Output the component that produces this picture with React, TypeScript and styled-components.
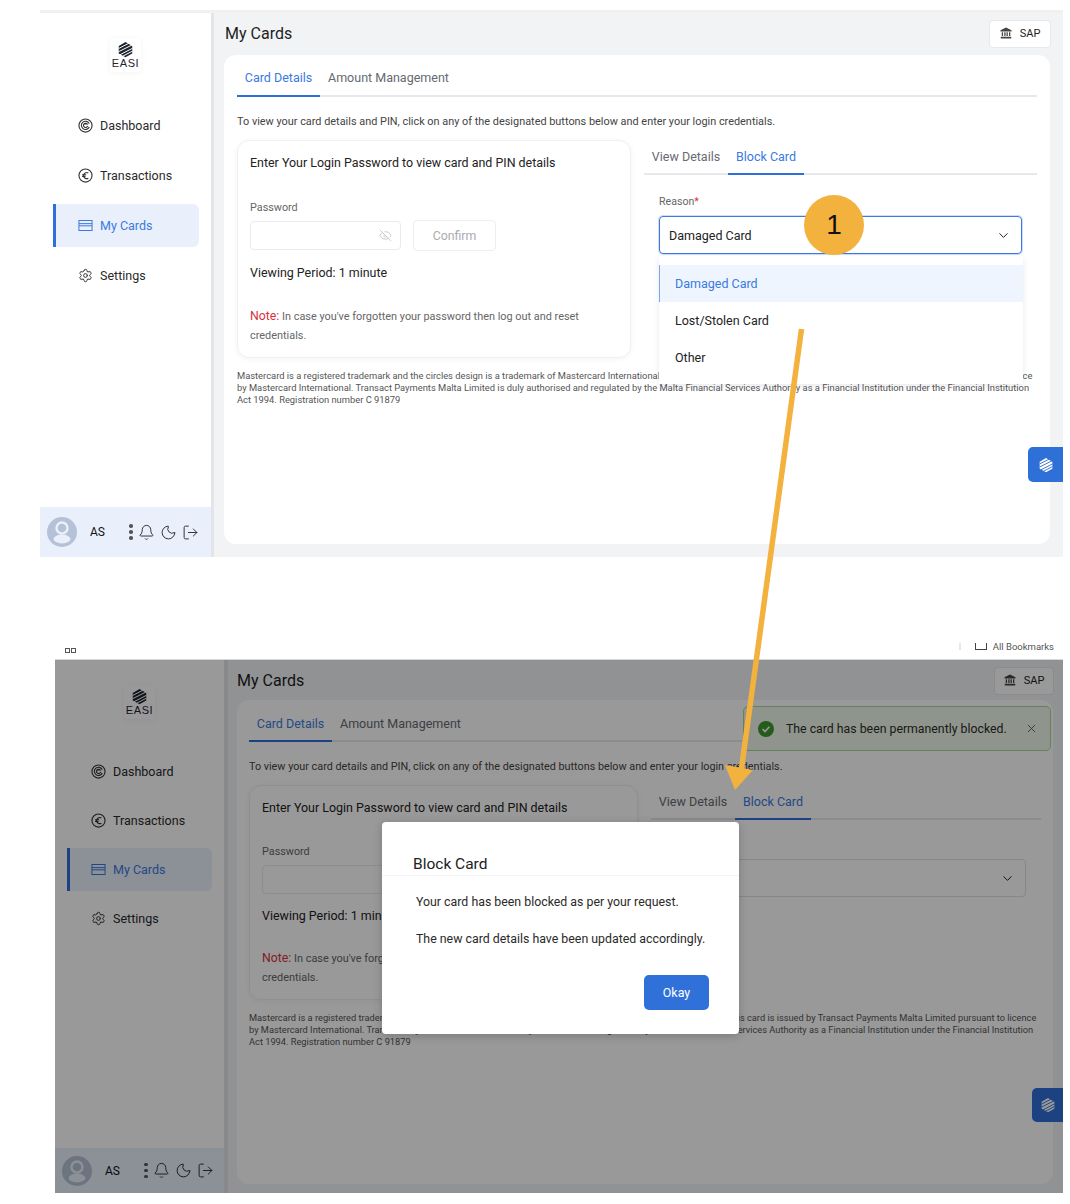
import React from 'react';
import styled, { createGlobalStyle, ThemeProvider } from 'styled-components';
import { Bell, ChevronDown, EyeOff, LogOut, Moon, Settings, X } from 'lucide-react';

const GlobalStyle = createGlobalStyle`
  html, body { margin: 0; background: #fff; }
  body { font-family: Roboto, "Liberation Sans", sans-serif; color: #222; }
`;

const topMetrics = {
  left: 40, width: 1023, height: 544, side: 171, rule: 3, padL: 10, padR: 13, padB: 13, head: 42, sap: 62, titleX: 1,
  inner: 13, card: 394, activeL: 13, activeW: 146, navTop: 91, navGap: 7, itemPad: 25, foot: 50, tight: 0, btnW: 35, btnH: 35, btnB: 75,
  tabPt: 4, intro: 10.9, legal: 9.35, reasonTop: 19,
};
const bottomMetrics = {
  left: 55, width: 1008, height: 533, side: 169, rule: 4, padL: 9, padR: 10, padB: 9, head: 40, sap: 60, titleX: 0,
  inner: 12, card: 389, activeL: 12, activeW: 145, navTop: 90, navGap: 6, itemPad: 24, foot: 45, tight: 1, btnW: 31, btnH: 34, btnB: 71,
  tabPt: 6, intro: 10.8, legal: 9.26, reasonTop: 17,
};

const Page = styled.div`
  position: relative;
  width: 1070px;
  height: 1204px;
  padding-top: 10px;
  box-sizing: border-box;
  overflow: hidden;
`;

const Screen = styled.section`
  position: relative;
  display: flex;
  width: ${p => p.theme.width}px;
  height: ${p => p.theme.height}px;
  margin-left: ${p => p.theme.left}px;
  border-top: 3px solid #f0f0f2;
  background: #f2f3f5;
  overflow: hidden;
  &[data-dim='true'] { border-top: 1px solid #d8d8d8; }
`;

const Sidebar = styled.aside`
  display: flex;
  flex-direction: column;
  flex: none;
  width: ${p => p.theme.side}px;
  background: #fff;
  border-right: ${p => p.theme.rule}px solid #e4e5e8;
`;

const LogoBox = styled.div`
  display: flex;
  flex-direction: column;
  align-items: center;
  justify-content: center;
  width: 31px;
  height: 34px;
  margin: 25px auto 0;
  box-shadow: 0 1px 6px rgba(30, 40, 60, 0.05);
  border-radius: 4px;
`;

const LogoText = styled.span`
  font-family: "Liberation Sans", sans-serif;
  font-size: 11px;
  line-height: 11px;
  color: #1f2530;
  letter-spacing: 0.6px;
`;

const Nav = styled.nav`
  display: flex;
  flex-direction: column;
  gap: ${p => p.theme.navGap}px;
  margin-top: ${p => p.theme.navTop - 59}px;
  flex: 1;
`;

const NavItem = styled.div<{ $active?: boolean }>`
  display: flex;
  align-items: center;
  gap: 7px;
  height: 43px;
  width: ${p => p.theme.activeW}px;
  margin-left: ${p => p.theme.activeL}px;
  padding-left: ${p => p.theme.itemPad}px;
  box-sizing: border-box;
  font-size: 12.5px;
  border-radius: 0 6px 6px 0;
  color: ${p => (p.$active ? '#3b7ade' : '#2a2a2a')};
  background: ${p => (p.$active ? '#e9f0fc' : 'transparent')};
  border-left: 3px solid ${p => (p.$active ? '#2f6fdb' : 'transparent')};
  & > svg { margin-left: -3px; flex: none; }
`;

const SideFoot = styled.footer`
  display: flex;
  align-items: center;
  height: ${p => p.theme.foot}px;
  padding-left: 7px;
  background: #e9f0fc;
`;

const UserName = styled.span`
  font-size: 12px;
  font-weight: 400;
  margin-left: 13px;
  color: #111;
  width: 39px;
`;

const FootIcons = styled.div`
  display: flex;
  align-items: center;
  gap: 5px;
  color: #333;
`;

const Dots = styled.span`
  display: flex;
  flex-direction: column;
  gap: 2.5px;
`;

const Dot = styled.i`
  display: block;
  width: 3.5px;
  height: 3.5px;
  border-radius: 50%;
  background: #555;
`;

const Main = styled.main`
  flex: 1;
  min-width: 0;
  display: flex;
  flex-direction: column;
  padding: 0 ${p => p.theme.padR}px ${p => p.theme.padB}px ${p => p.theme.padL}px;
`;

const TopRow = styled.header`
  display: flex;
  align-items: flex-start;
  justify-content: space-between;
  height: ${p => p.theme.head}px;
  flex: none;
`;

const PageTitle = styled.h1`
  margin: 11px 0 0 ${p => p.theme.titleX}px;
  font-size: 16px;
  line-height: 20px;
  font-weight: 400;
  color: #1e1e1e;
`;

const SapButton = styled.div`
  display: flex;
  align-items: center;
  justify-content: center;
  gap: 8px;
  width: ${p => p.theme.sap}px;
  height: 28px;
  margin-top: 7px;
  margin-right: -1px;
  padding-bottom: 2px;
  background: #fff;
  border: 1px solid #e6e8ec;
  border-radius: 4px;
  box-sizing: border-box;
  font-size: 11px;
  color: #222;
`;

const Panel = styled.div`
  flex: 1;
  min-height: 0;
  background: #fff;
  border-radius: 12px;
  padding: 0 ${p => p.theme.inner}px;
`;

const Tabs = styled.div<{ $h: number }>`
  display: flex;
  height: ${p => p.$h}px;
  border-bottom: 2px solid #e6e8ec;
  box-sizing: border-box;
`;

const Tab = styled.div<{ $active?: boolean; $w?: number; $main?: boolean }>`
  display: flex;
  align-items: center;
  justify-content: center;
  width: ${p => (p.$w ? `${p.$w}px` : 'auto')};
  height: calc(100% + 2px);
  padding: ${p => (p.$main ? p.theme.tabPt : 0)}px ${p => (p.$w ? 0 : 8)}px 0;
  box-sizing: border-box;
  font-size: 12.5px;
  white-space: nowrap;
  color: ${p => (p.$active ? '#3b7ade' : '#666a70')};
  border-bottom: 2px solid ${p => (p.$active ? '#2f6fdb' : 'transparent')};
`;

const Intro = styled.p`
  margin: 18px 0 11px;
  font-size: ${p => p.theme.intro}px;
  line-height: 14px;
  color: #444;
`;

const Columns = styled.div`
  display: flex;
  gap: 13px;
  align-items: flex-start;
`;

const LoginCard = styled.div`
  flex: none;
  width: ${p => p.theme.card}px;
  padding: 13px 12px 12px;
  box-sizing: border-box;
  border: 1px solid #eef0f3;
  border-radius: 12px;
  box-shadow: 0 1px 5px rgba(40, 50, 70, 0.06);
  background: #fff;
`;

const CardTitle = styled.h2`
  margin: 0;
  font-size: 12.45px;
  line-height: 18px;
  font-weight: 400;
  color: #222;
`;

const FieldLabel = styled.div`
  margin-top: ${p => 28 - p.theme.tight}px;
  font-size: 10.8px;
  line-height: 16px;
  color: #666;
`;

const PasswordRow = styled.div`
  display: flex;
  align-items: center;
  gap: 12px;
  margin-top: 4px;
  height: 31px;
`;

const PasswordInput = styled.div`
  display: flex;
  align-items: center;
  justify-content: flex-end;
  width: 151px;
  height: 29px;
  padding-right: 8px;
  box-sizing: border-box;
  border: 1px solid #e9ebf0;
  border-radius: 4px;
  color: #c2c4c8;
`;

const ConfirmButton = styled.div`
  display: flex;
  align-items: center;
  justify-content: center;
  width: 83px;
  height: 31px;
  box-sizing: border-box;
  border: 1px solid #eceef2;
  border-radius: 4px;
  font-size: 12.3px;
  color: #a9abb0;
`;

const Period = styled.div`
  margin-top: ${p => 13 - p.theme.tight}px;
  font-size: 12.45px;
  line-height: 18px;
  color: #222;
`;

const NoteText = styled.p`
  margin: ${p => 25 - p.theme.tight}px 0 0;
  font-size: 10.9px;
  line-height: 19px;
  color: #666;
`;

const NoteLabel = styled.span`
  font-size: 12.3px;
  color: #d9313d;
`;

const RightColumn = styled.div`
  flex: 1;
  min-width: 0;
`;

const ReasonArea = styled.div`
  position: relative;
  padding: ${p => p.theme.reasonTop}px 15px 0;
`;

const ReasonLabel = styled.div`
  font-size: 10.6px;
  line-height: 16px;
  color: #666;
`;

const Star = styled.span`
  color: #d9313d;
`;

const SelectBox = styled.div<{ $open?: boolean }>`
  display: flex;
  align-items: center;
  justify-content: space-between;
  height: 38px;
  margin-top: 6px;
  padding: 0 10px 0 9px;
  box-sizing: border-box;
  border: 1px solid ${p => (p.$open ? '#3b7ade' : '#dfe1e5')};
  box-shadow: ${p => (p.$open ? '0 0 0 1px rgba(59,122,222,.25)' : 'none')};
  border-radius: 4px;
  font-size: 12.5px;
  color: #222;
`;

const Dropdown = styled.ul`
  position: absolute;
  z-index: 3;
  left: 15px;
  right: 14px;
  top: 81px;
  height: 128px;
  margin: 0;
  padding: 9px 0 0;
  box-sizing: border-box;
  list-style: none;
  background: #fff;
  box-shadow: 0 2px 6px rgba(30, 40, 60, 0.1);
`;

const DropOption = styled.li<{ $selected?: boolean }>`
  display: flex;
  align-items: center;
  height: 37px;
  padding-left: 15px;
  box-sizing: border-box;
  font-size: 12.5px;
  color: ${p => (p.$selected ? '#3b7ade' : '#222')};
  background: ${p => (p.$selected ? '#eef5fe' : 'transparent')};
  border-left: 1px solid ${p => (p.$selected ? '#7ea6e8' : 'transparent')};
`;

const Legal = styled.p`
  margin: 12px 0 0;
  font-size: ${p => p.theme.legal}px;
  line-height: 12px;
  color: #555;
`;

const Toast = styled.div`
  position: absolute;
  top: 46px;
  right: 12px;
  display: flex;
  align-items: center;
  width: 308px;
  height: 45px;
  padding: 0 12px 0 14px;
  box-sizing: border-box;
  background: #eff8e9;
  border: 1px solid #a9d79a;
  border-radius: 5px;
  font-size: 12.3px;
  color: #2c2c2c;
  gap: 12px;
`;

const ToastText = styled.span`
  flex: 1;
  white-space: nowrap;
`;

const FloatButton = styled.div`
  position: absolute;
  right: 0;
  bottom: ${p => p.theme.btnB}px;
  display: flex;
  align-items: center;
  justify-content: center;
  width: ${p => p.theme.btnW}px;
  height: ${p => p.theme.btnH}px;
  background: #2f6fd8;
  border-radius: 5px 0 0 5px;
`;

const Overlay = styled.div`
  position: absolute;
  inset: 0;
  z-index: 5;
  display: flex;
  align-items: center;
  justify-content: center;
  background: rgba(0, 0, 0, 0.4);
`;

const Modal = styled.div`
  width: 357px;
  height: 212px;
  margin: 2px 0 0 3px;
  background: #fff;
  border-radius: 4px;
  box-shadow: 0 2px 10px rgba(0, 0, 0, 0.2);
  display: flex;
  flex-direction: column;
`;

const ModalTitle = styled.h3`
  margin: 0;
  padding: 32px 31px 0;
  height: 54px;
  box-sizing: border-box;
  font-size: 15.5px;
  line-height: 20px;
  font-weight: 400;
  color: #222;
  border-bottom: 1px solid #f2f4f8;
`;

const ModalBody = styled.div`
  flex: 1;
  padding: 17px 34px 0;
  font-size: 12.35px;
  line-height: 18px;
  color: #2a2a2a;
`;

const ModalLine = styled.p`
  margin: 0 0 19px;
  white-space: nowrap;
`;

const ModalActions = styled.div`
  display: flex;
  justify-content: flex-end;
  padding: 0 30px 24px;
`;

const OkayButton = styled.div`
  display: flex;
  align-items: center;
  justify-content: center;
  width: 65px;
  height: 35px;
  background: #3071d9;
  border-radius: 5px;
  color: #fff;
  font-size: 12.4px;
`;

const BrowserStrip = styled.div`
  display: flex;
  justify-content: space-between;
  width: 1008px;
  height: 16px;
  margin: 86px 0 0 55px;
  overflow: hidden;
  color: #555;
`;

const TinySquares = styled.div`
  display: flex;
  gap: 1px;
  margin: 5px 0 0 10px;
`;

const TinySquare = styled.i`
  display: block;
  width: 5px;
  height: 5px;
  border: 1px solid #555;
  box-sizing: border-box;
`;

const BookmarkArea = styled.div`
  display: flex;
  align-items: flex-start;
  margin-right: 9px;
  gap: 6px;
`;

const BookmarkRule = styled.i`
  display: block;
  width: 2px;
  height: 7px;
  margin-right: 8px;
  background: #dfe8f8;
`;

const BookmarkIcon = styled.i`
  display: block;
  width: 12px;
  height: 7px;
  box-sizing: border-box;
  border: 1px solid #444;
  border-top: none;
`;

const BookmarkText = styled.span`
  font-size: 9.5px;
  line-height: 7px;
  white-space: nowrap;
`;

const Badge = styled.div`
  position: absolute;
  z-index: 8;
  left: 804px;
  top: 195px;
  display: flex;
  align-items: center;
  justify-content: center;
  width: 60px;
  height: 60px;
  border-radius: 50%;
  background: #f3b13e;
  font-family: "Liberation Sans", Arial, sans-serif;
  font-size: 28px;
  color: #111;
`;

const ArrowLayer = styled.svg`
  position: absolute;
  z-index: 9;
  left: 0;
  top: 0;
  pointer-events: none;
`;

const HexMark = ({ size, color, stripe }: { size: number; color: string; stripe: string }) => (
  <svg width={size} height={size} viewBox="0 0 24 24" aria-hidden="true">
    <path d="M12 1.5 21.5 7v10.5L12 23l-9.5-5.5V7z" fill={color} />
    <path d="M2.5 10.5 17 3M2.5 15 21.5 5.5M4 19.5 21.5 10.5M8 21.5 21.5 14.5" stroke={stripe} strokeWidth="1.4" fill="none" />
  </svg>
);

const DashboardIcon = () => (
  <svg width="15" height="15" viewBox="0 0 24 24" fill="none" stroke="#333" strokeWidth="1.8" aria-hidden="true">
    <circle cx="12" cy="12" r="10.5" />
    <path d="M18 14.5A6.6 6.6 0 1 1 18 9" />
    <path d="M15.5 12.5a3.4 3.4 0 1 1 -0.8 -3H10.5" />
  </svg>
);

const EuroCircleIcon = () => (
  <svg width="15" height="15" viewBox="0 0 24 24" fill="none" stroke="#333" strokeWidth="1.8" aria-hidden="true">
    <circle cx="12" cy="12" r="10.5" />
    <path d="M16.5 8a5 5 0 0 0-7.6 4 5 5 0 0 0 7.6 4.3" />
    <path d="M6.5 10.8h6.5M6.5 13.4h5.5" />
  </svg>
);

const CardIcon = () => (
  <svg width="15" height="15" viewBox="0 0 24 24" fill="none" stroke="#3b7ade" strokeWidth="1.6" aria-hidden="true">
    <rect x="1.5" y="4" width="21" height="16" />
    <path d="M1.5 9h21M1.5 12.5h21" />
  </svg>
);

const BankIcon = () => (
  <svg width="12" height="12" viewBox="0 0 24 24" fill="#444" aria-hidden="true">
    <path d="M12 1 1 6.5V9h22V6.5z" />
    <path d="M3.5 10.5h2.6v7.5H3.5zM8.5 10.5h2.6v7.5H8.5zM13 10.5h2.6v7.5H13zM18 10.5h2.6v7.5H18zM1.5 19.5h21V23h-21z" />
  </svg>
);

const AvatarIcon = () => (
  <svg width="30" height="30" viewBox="0 0 30 30" aria-hidden="true">
    <circle cx="15" cy="15" r="15" fill="#b5c1d6" />
    <circle cx="15" cy="11" r="5.5" fill="none" stroke="#e9f0fc" strokeWidth="2.4" />
    <ellipse cx="15" cy="22" rx="8.5" ry="4.4" fill="#e9f0fc" />
  </svg>
);

const CheckBadge = () => (
  <svg width="16" height="16" viewBox="0 0 16 16" aria-hidden="true">
    <circle cx="8" cy="8" r="8" fill="#3f9a2f" />
    <path d="M4.6 8.2 7 10.5 11.4 5.8" fill="none" stroke="#fff" strokeWidth="1.6" />
  </svg>
);

const legalCopy = 'Mastercard is a registered trademark and the circles design is a trademark of Mastercard International Incorporated. This card is issued by Transact Payments Malta Limited pursuant to licence by Mastercard International. Transact Payments Malta Limited is duly authorised and regulated by the Malta Financial Services Authority as a Financial Institution under the Financial Institution Act 1994. Registration number C 91879';

const AppScreen = ({ open, dim }: { open?: boolean; dim?: boolean }) => (
  <Screen data-dim={dim ? 'true' : 'false'}>
    <Sidebar>
      <LogoBox>
        <HexMark size={17} color="#1f2530" stripe="#fff" />
        <LogoText>EASI</LogoText>
      </LogoBox>
      <Nav>
        <NavItem><DashboardIcon />Dashboard</NavItem>
        <NavItem><EuroCircleIcon />Transactions</NavItem>
        <NavItem $active><CardIcon />My Cards</NavItem>
        <NavItem><Settings size={15} strokeWidth={1.6} color="#333" />Settings</NavItem>
      </Nav>
      <SideFoot>
        <AvatarIcon />
        <UserName>AS</UserName>
        <FootIcons>
          <Dots><Dot /><Dot /><Dot /></Dots>
          <Bell size={17} strokeWidth={1.4} />
          <Moon size={17} strokeWidth={1.4} />
          <LogOut size={17} strokeWidth={1.4} />
        </FootIcons>
      </SideFoot>
    </Sidebar>
    <Main>
      <TopRow>
        <PageTitle>My Cards</PageTitle>
        <SapButton><BankIcon />SAP</SapButton>
      </TopRow>
      <Panel>
        <Tabs $h={42}>
          <Tab $active $main $w={83}>Card Details</Tab>
          <Tab $main>Amount Management</Tab>
        </Tabs>
        <Intro>To view your card details and PIN, click on any of the designated buttons below and enter your login credentials.</Intro>
        <Columns>
          <LoginCard>
            <CardTitle>Enter Your Login Password to view card and PIN details</CardTitle>
            <FieldLabel>Password</FieldLabel>
            <PasswordRow>
              <PasswordInput><EyeOff size={13} strokeWidth={1.6} /></PasswordInput>
              <ConfirmButton>Confirm</ConfirmButton>
            </PasswordRow>
            <Period>Viewing Period: 1 minute</Period>
            <NoteText><NoteLabel>Note:</NoteLabel> In case you've forgotten your password then log out and reset credentials.</NoteText>
          </LoginCard>
          <RightColumn>
            <Tabs $h={35}>
              <Tab $w={84}>View Details</Tab>
              <Tab $active $w={76}>Block Card</Tab>
            </Tabs>
            <ReasonArea>
              <ReasonLabel>Reason<Star>*</Star></ReasonLabel>
              <SelectBox $open={open}>
                <span>{open ? 'Damaged Card' : ''}</span>
                <ChevronDown size={15} strokeWidth={1.6} color="#222" />
              </SelectBox>
              {open && (
                <Dropdown>
                  <DropOption $selected>Damaged Card</DropOption>
                  <DropOption>Lost/Stolen Card</DropOption>
                  <DropOption>Other</DropOption>
                </Dropdown>
              )}
            </ReasonArea>
          </RightColumn>
        </Columns>
        <Legal>{legalCopy}</Legal>
      </Panel>
    </Main>
    {dim && (
      <Toast>
        <CheckBadge />
        <ToastText>The card has been permanently blocked.</ToastText>
        <X size={13} strokeWidth={1.6} color="#555" />
      </Toast>
    )}
    <FloatButton><HexMark size={16} color="#fff" stripe="#2f6fd8" /></FloatButton>
    {dim && (
      <Overlay>
        <Modal>
          <ModalTitle>Block Card</ModalTitle>
          <ModalBody>
            <ModalLine>Your card has been blocked as per your request.</ModalLine>
            <ModalLine>The new card details have been updated accordingly.</ModalLine>
          </ModalBody>
          <ModalActions><OkayButton>Okay</OkayButton></ModalActions>
        </Modal>
      </Overlay>
    )}
  </Screen>
);

export default function App() {
  return (
    <Page>
      <GlobalStyle />
      <ThemeProvider theme={topMetrics}>
        <AppScreen open />
      </ThemeProvider>
      <BrowserStrip>
        <TinySquares><TinySquare /><TinySquare /></TinySquares>
        <BookmarkArea>
          <BookmarkRule />
          <BookmarkIcon />
          <BookmarkText>All Bookmarks</BookmarkText>
        </BookmarkArea>
      </BrowserStrip>
      <ThemeProvider theme={bottomMetrics}>
        <AppScreen dim />
      </ThemeProvider>
      <Badge>1</Badge>
      <ArrowLayer width="1070" height="1204" viewBox="0 0 1070 1204" aria-hidden="true">
        <path d="M801.5 329 741 772" stroke="#f3b13e" strokeWidth="5.5" fill="none" />
        <path d="M725 765 753 770 735 790z" fill="#f3b13e" />
      </ArrowLayer>
    </Page>
  );
}
